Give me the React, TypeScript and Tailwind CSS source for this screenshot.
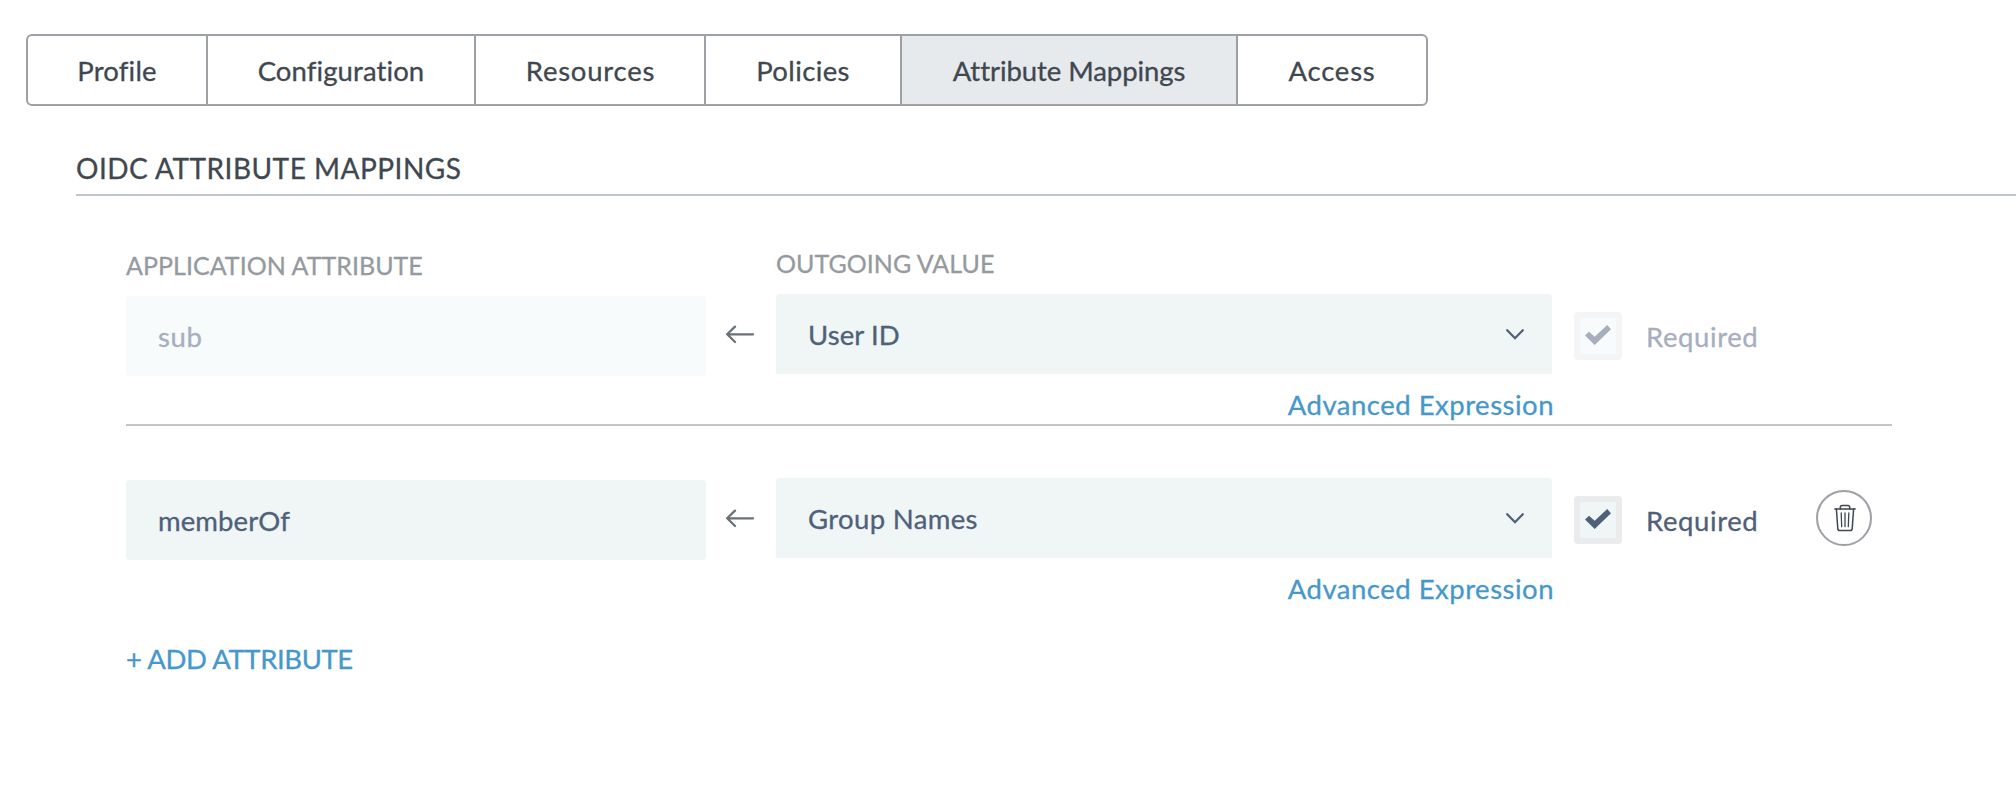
import React from "react";

const TABS = [
  { label: "Profile", box: "w-[180px]", text: "tracking-[0.19px]" },
  { label: "Configuration", box: "w-[268px]", text: "tracking-[0.1px]" },
  { label: "Resources", box: "w-[230px] pl-px", text: "tracking-[0.78px]" },
  { label: "Policies", box: "w-[196px]", text: "tracking-[0.39px]" },
  { label: "Attribute Mappings", box: "w-[336px]", text: "tracking-[-0.07px]", active: true },
  { label: "Access", box: "w-[188px]", text: "tracking-[0.8px]" },
];

function TabBar() {
  return (
    <nav className="ml-[26px] flex h-[72px] w-[1402px] overflow-hidden rounded-[6px] border-2 border-[#9da0a5] bg-white">
      {TABS.map((tab, i) => (
        <button
          key={tab.label}
          className={`flex shrink-0 items-center justify-center pt-0.5 whitespace-nowrap text-[#40474f] ${tab.box} ${tab.text} ${
            i < TABS.length - 1 ? "border-r-2 border-[#9da0a5]" : ""
          } ${tab.active ? "bg-[#e6eaed]" : ""}`}
        >
          {tab.label}
        </button>
      ))}
    </nav>
  );
}

function LeftArrow() {
  return (
    <div className="flex h-20 w-[70px] shrink-0 items-center pl-5">
      <svg width="28" height="20" viewBox="0 0 28 20" fill="none" stroke="#6b7177" strokeWidth="2.3" strokeLinecap="round" strokeLinejoin="round">
        <path d="M27 10.3H1.4M9 2.6L1.2 10.3L9 18" />
      </svg>
    </div>
  );
}

function Select({ value, text }: { value: string; text: string }) {
  return (
    <div className="flex h-20 items-center justify-between rounded-t-[4px] bg-[#f0f6f6] pr-7 pl-8 text-[#4f6079]">
      <span className={`pt-0.5 ${text}`}>{value}</span>
      <svg width="18" height="12" viewBox="0 0 18 12" fill="none" stroke="#4f6079" strokeWidth="2.3" strokeLinecap="round">
        <path d="M1.2 2.2L9 10.2L16.8 2.2" />
      </svg>
    </div>
  );
}

function AdvancedLink() {
  return (
    <a className="-mr-0.5 mt-[15px] mb-[-1px] block h-8 text-right leading-8 tracking-[0.5px] whitespace-nowrap text-[#4698cb]">
      Advanced Expression
    </a>
  );
}

function RequiredBox({ disabled }: { disabled?: boolean }) {
  return (
    <label className="flex h-12 items-center gap-6">
      <span
        className={`flex size-12 items-center justify-center rounded-[4px] border-[6px] ${
          disabled ? "border-[#f4f5f7] bg-[#f7fbfc]" : "border-[#e9ebec] bg-[#f0f6f6]"
        }`}
      >
        <svg width="36" height="36" viewBox="6 6 36 36" className={disabled ? "fill-[#a7aebd]" : "fill-[#4f6079]"}>
          <path d="M11 23.4L15 19.7L20.7 24.8L33.2 13L37 17.2L20.7 33Z" />
        </svg>
      </span>
      <span className={`pt-0.5 tracking-[0.6px] ${disabled ? "text-[#a7aebd]" : "text-[#4f6079]"}`}>Required</span>
    </label>
  );
}

function DeleteButton() {
  return (
    <button className="flex size-14 items-center justify-center rounded-full border-2 border-[#9da0a5] pl-0.5">
      <svg width="24" height="30" viewBox="0 0 24 30" fill="none" stroke="#40474f" strokeWidth="1.5" strokeLinecap="round" strokeLinejoin="round">
        <path d="M1.8 6H22.2" />
        <path d="M7.3 6V4.2Q7.3 2.4 9.1 2.4H14.9Q16.7 2.4 16.7 4.2V6" />
        <path d="M3.4 6L4.8 25.6Q5 27.6 6.8 27.6H17.2Q19 27.6 19.2 25.6L20.6 6" />
        <path d="M8.2 10L8.7 23.7M12 10V23.7M15.8 10L15.3 23.7" strokeWidth="1.3" />
      </svg>
    </button>
  );
}

export default function App() {
  return (
    <main className="min-h-[792px] w-full overflow-hidden bg-white pt-[34px] font-['Lato',sans-serif] text-[27.5px] leading-8 [-webkit-text-stroke:0.3px]">
      <TabBar />

      <h2 className="mt-[46px] ml-[76px] border-b-2 border-[#c0c5c9] pb-2.5 text-[28px] leading-8 tracking-[0.5px] text-[#40474f]">
        OIDC ATTRIBUTE MAPPINGS
      </h2>

      <section className="ml-[126px] w-[1766px]">
        <div className="flex items-start border-b-2 border-[#c0c5c9] pt-[50px] pb-1">
          <div className="w-[580px] shrink-0 pt-[3px]">
            <div className="mb-[15px] text-[25px] leading-8 tracking-[0.03px] text-[#959a9f]">APPLICATION ATTRIBUTE</div>
            <div className="flex h-20 items-center rounded-[4px] bg-[#f7fbfc] pt-0.5 pl-8 tracking-[0.6px] text-[#a7aebd]">sub</div>
          </div>
          <div className="pt-12">
            <LeftArrow />
          </div>
          <div className="w-[776px] shrink-0 pt-px">
            <div className="mb-[15px] text-[25px] leading-8 tracking-[0.03px] text-[#959a9f]">OUTGOING VALUE</div>
            <Select value="User ID" text="tracking-[0.1px]" />
            <AdvancedLink />
          </div>
          <div className="pt-[66px] pl-[22px]">
            <RequiredBox disabled />
          </div>
        </div>

        <div className="flex items-start pt-[52px]">
          <div className="w-[580px] shrink-0 pt-0.5">
            <div className="flex h-20 items-center rounded-[4px] bg-[#f0f6f6] pt-0.5 pl-8 tracking-[0.1px] text-[#4f6079]">memberOf</div>
          </div>
          <LeftArrow />
          <div className="w-[776px] shrink-0">
            <Select value="Group Names" text="tracking-[0.35px]" />
            <AdvancedLink />
          </div>
          <div className="pt-[18px] pl-[22px]">
            <RequiredBox />
          </div>
          <div className="mr-5 ml-auto pt-3">
            <DeleteButton />
          </div>
        </div>

        <button className="mt-[39px] block h-8 leading-8 tracking-[-0.4px] whitespace-nowrap text-[#4698cb]">+ ADD ATTRIBUTE</button>
      </section>
    </main>
  );
}
